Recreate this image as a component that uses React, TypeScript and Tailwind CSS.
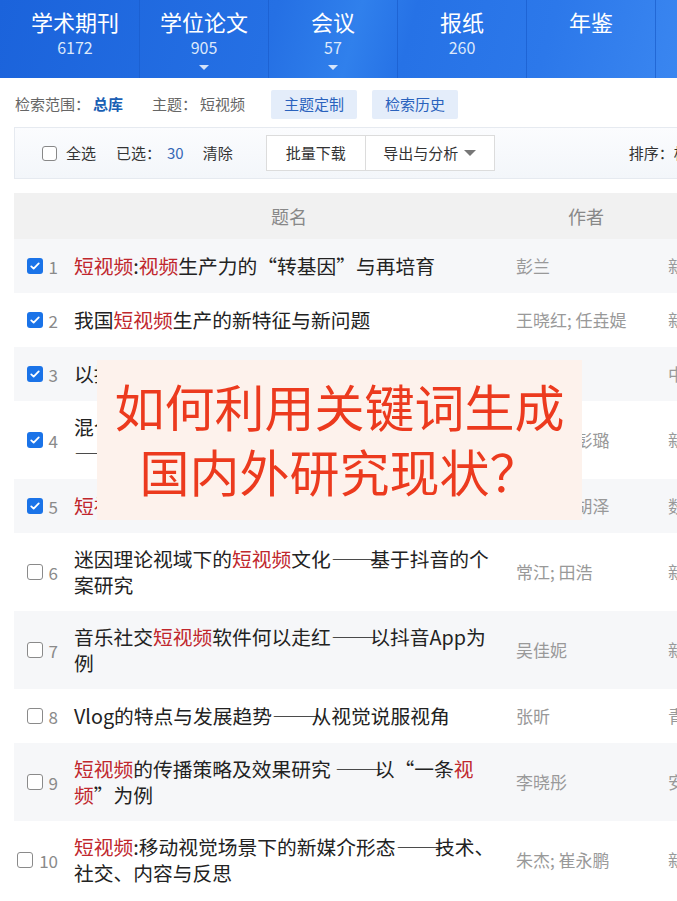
import type { ReactNode } from "react";

type Seg = string | { r: string };
type Row = { n: number; checked: boolean; lines: Seg[][]; author: string; src: string };

const rows: Row[] = [
  { n: 1, checked: true, lines: [[{ r: "短视频" }, ":", { r: "视频" }, "生产力的“转基因”与再培育"]], author: "彭兰", src: "新闻与写作" },
  { n: 2, checked: true, lines: [["我国", { r: "短视频" }, "生产的新特征与新问题"]], author: "王晓红; 任垚媞", src: "新闻战线" },
  { n: 3, checked: true, lines: [["以抖音为例的", { r: "短视频" }, "社交传播机制研究"]], author: "陈秋心", src: "中国出版" },
  {
    n: 4,
    checked: true,
    lines: [["混合情感传播模式：主流媒体", { r: "短视频" }, "内容生产研究"], ["——以人民日报抖音号为例"]],
    author: "张志安; 彭璐",
    src: "新闻与写作",
  },
  { n: 5, checked: true, lines: [[{ r: "短视频" }, "平台的内容生态与治理路径"]], author: "王长潇; 胡泽", src: "数字传媒研究" },
  {
    n: 6,
    checked: false,
    lines: [["迷因理论视域下的", { r: "短视频" }, "文化——基于抖音的个"], ["案研究"]],
    author: "常江; 田浩",
    src: "新闻与写作",
  },
  {
    n: 7,
    checked: false,
    lines: [["音乐社交", { r: "短视频" }, "软件何以走红——以抖音App为"], ["例"]],
    author: "吴佳妮",
    src: "新闻研究导刊",
  },
  { n: 8, checked: false, lines: [["Vlog的特点与发展趋势——从视觉说服视角"]], author: "张昕", src: "青年记者" },
  {
    n: 9,
    checked: false,
    lines: [[{ r: "短视频" }, "的传播策略及效果研究 ——以“一条", { r: "视" }], [{ r: "频" }, "”为例"]],
    author: "李晓彤",
    src: "安徽新闻",
  },
  {
    n: 10,
    checked: false,
    lines: [[{ r: "短视频" }, ":移动视觉场景下的新媒介形态——技术、"], ["社交、内容与反思"]],
    author: "朱杰; 崔永鹏",
    src: "新闻界",
  },
];

const tabs = [
  { name: "学术期刊", count: "6172", arrow: false },
  { name: "学位论文", count: "905", arrow: true },
  { name: "会议", count: "57", arrow: true },
  { name: "报纸", count: "260", arrow: false },
  { name: "年鉴", count: "", arrow: false },
];

function Check({ on }: { on: boolean }) {
  if (on)
    return (
      <span className="flex h-[16px] w-[16px] items-center justify-center rounded-[3px] bg-[#1a73e8]">
        <svg viewBox="0 0 16 16" className="h-[12px] w-[12px]" fill="none">
          <path d="M3 8.5l3.2 3L13 4.5" stroke="white" strokeWidth="2.4" strokeLinecap="round" strokeLinejoin="round" />
        </svg>
      </span>
    );
  return <span className="h-[16px] w-[16px] rounded-[3px] border border-[#8a8a8a] bg-white" />;
}

// em dashes set full width, like the CJK font of the original page
function Text({ s }: { s: string }) {
  const parts = s.split("——");
  return (
    <>
      {parts.map((p, i) => (
        <span key={i}>
          {i > 0 && (
            <span className="inline-block w-[2em]">
              <span className="inline-block origin-left scale-x-[1.25] [font-feature-settings:'fwid']">——</span>
            </span>
          )}
          {p}
        </span>
      ))}
    </>
  );
}

function Title({ segs }: { segs: Seg[] }) {
  return (
    <div className="whitespace-nowrap">
      {segs.map((s, i) =>
        typeof s === "string" ? (
          <Text key={i} s={s} />
        ) : (
          <span key={i} className="text-[#c0272d]">
            {s.r}
          </span>
        )
      )}
    </div>
  );
}

function Btn({ children }: { children: ReactNode }) {
  return (
    <span className="flex h-[29px] items-center rounded-[2px] bg-[#e4edfa] px-[13px] text-[15px] text-[#2a62bd]">{children}</span>
  );
}

export default function App() {
  return (
    <div className="relative w-[677px] overflow-hidden bg-white font-['Noto_Sans_CJK_SC','Noto_Sans',sans-serif]">
      {/* database tabs */}
      <div className="flex h-[78px] bg-[linear-gradient(105deg,#1b63db_0%,#2570e4_40%,#3080ec_52%,#2672e6_60%,#2c78ea_80%,#3a86f0_100%)] pl-[11px]">
        {tabs.map((t) => (
          <div key={t.name} className="flex w-[129px] shrink-0 flex-col items-center border-r border-[#1a5ccc]/70 pt-[6px]">
            <span className="text-[22px] leading-[30px] text-white">{t.name}</span>
            <span className="text-[16px] leading-[22px] text-[#dce8fb]">{t.count}</span>
            {t.arrow && (
              <span className="mt-[7px] h-0 w-0 border-x-[5px] border-t-[5px] border-x-transparent border-t-white/80" />
            )}
          </div>
        ))}
        <div className="w-[129px] shrink-0" />
      </div>

      {/* scope line */}
      <div className="flex h-[49px] items-center whitespace-nowrap pl-[15px] pt-[3px] text-[15px] text-[#666]">
        <span>检索范围：</span>
        <span className="ml-[3px] font-bold text-[#1a5fb4]">总库</span>
        <span className="ml-[29px]">主题：</span>
        <span className="ml-[3px]">短视频</span>
        <span className="ml-[26px]">
          <Btn>主题定制</Btn>
        </span>
        <span className="ml-[15px]">
          <Btn>检索历史</Btn>
        </span>
      </div>

      {/* toolbar */}
      <div className="ml-[14px] flex h-[52px] w-[800px] items-center whitespace-nowrap border border-r-0 border-[#e6eaf0] bg-[linear-gradient(180deg,#fbfcfe,#f3f6fa)] pl-[27px] text-[15px] text-[#333]">
        <span className="h-[15px] w-[15px] shrink-0 rounded-[3px] border border-[#888] bg-white" />
        <span className="ml-[9px] shrink-0">全选</span>
        <span className="ml-[20px] shrink-0">已选：</span>
        <span className="ml-[6px] shrink-0 text-[#3567b5]">30</span>
        <span className="ml-[19px] shrink-0">清除</span>
        <div className="ml-[33px] flex h-[36px] shrink-0">
          <span className="flex w-[100px] items-center justify-center border border-[#dcdcdc] bg-white">批量下载</span>
          <span className="flex w-[129px] items-center justify-center gap-[6px] border border-l-0 border-[#dcdcdc] bg-white">
            导出与分析
            <span className="h-0 w-0 border-x-[6px] border-t-[6px] border-x-transparent border-t-[#777]" />
          </span>
        </div>
        <span className="ml-[134px] shrink-0">排序：相关度</span>
      </div>

      {/* table */}
      <div className="ml-[14px] mt-[14px] w-[800px]">
        <div className="flex h-[46px] items-center bg-[#f1f1f1] text-[18px] text-[#888]">
          <div className="w-[48px] shrink-0" />
          <div className="w-[442px] shrink-0 pl-[12px] text-center">题名</div>
          <div className="w-[152px] shrink-0 pl-[12px] text-center">作者</div>
          <div className="w-[150px] shrink-0 pl-[12px] text-center">来源</div>
        </div>
        {rows.map((r) => (
          <div
            key={r.n}
            className={`flex items-center ${r.lines.length > 1 ? "h-[78px]" : "h-[54px]"} ${r.n % 2 ? "bg-[#f6f7f9]" : "bg-white"}`}
          >
            <div className="flex w-[48px] shrink-0 items-center justify-end gap-[6px] pr-[4px]">
              <Check on={r.checked} />
              <span className="text-[17px] leading-none text-[#8a8a8a]">{r.n}</span>
            </div>
            <div className="w-[442px] shrink-0 pl-[12px] text-[19.75px] leading-[26px] text-[#222]">
              {r.lines.map((l, i) => (
                <Title key={i} segs={l} />
              ))}
            </div>
            <div className="w-[152px] shrink-0 whitespace-nowrap pl-[12px] text-[17px] text-[#999]">{r.author}</div>
            <div className="w-[150px] shrink-0 whitespace-nowrap pl-[12px] text-[17px] text-[#999]">{r.src}</div>
          </div>
        ))}
      </div>

      {/* caption overlay */}
      <div className="absolute left-[97px] top-[360px] flex h-[160px] w-[485px] flex-col items-center justify-center bg-[#fdf2ec] pb-[4px] text-[50px] leading-[65px] text-[#ec3a1e]">
        <span>如何利用关键词生成</span>
        <span>国内外研究现状？</span>
      </div>
    </div>
  );
}
